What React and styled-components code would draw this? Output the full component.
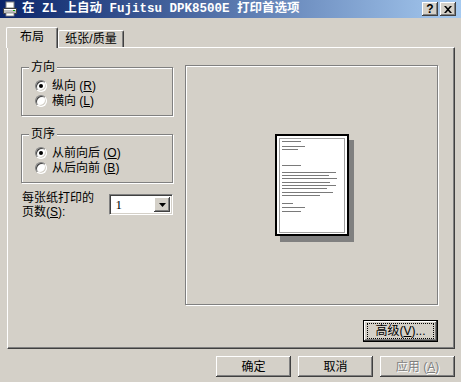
import React from "react";
import styled, { createGlobalStyle } from "styled-components";

const GlobalStyle = createGlobalStyle`
  html, body {
    margin: 0;
    padding: 0;
    background: #d4d0c8;
  }
  body {
    font-family: "Liberation Sans", "Noto Sans CJK SC", sans-serif;
    font-size: 12px;
    color: #000;
  }
`;

const raised = `
  background: #d4d0c8;
  box-shadow: inset -1px -1px #404040, inset 1px 1px #ffffff,
    inset -2px -2px #808080, inset 2px 2px #d4d0c8;
`;

const etched = `
  border: 1px solid #808080;
  box-shadow: inset 1px 1px #ffffff, 1px 1px 0 #ffffff;
`;

const Window = styled.div`
  width: 461px;
  height: 382px;
  background: #d4d0c8;
  display: flex;
  flex-direction: column;
  overflow: hidden;
`;

const TitleBar = styled.div`
  height: 18px;
  display: flex;
  align-items: center;
  padding: 0 5px 0 2px;
  background: linear-gradient(90deg, #0a246a 0%, #a6caf0 100%);
`;

const TitleText = styled.div`
  flex: 1;
  margin-left: 4px;
  color: #fff;
  font-family: "Liberation Mono", "Noto Sans CJK SC", monospace;
  font-weight: bold;
  font-size: 12.5px;
  line-height: 18px;
  white-space: pre;
`;

const CaptionButtons = styled.div`
  display: flex;
  gap: 2px;
`;

const CaptionButton = styled.div`
  ${raised}
  width: 16px;
  height: 14px;
  display: flex;
  align-items: center;
  justify-content: center;
  font-weight: bold;
  font-size: 12px;
  line-height: 14px;
`;

const Body = styled.div`
  flex: 1;
  display: flex;
  flex-direction: column;
  padding: 9px 6px 0 7px;
`;

const TabRow = styled.div`
  display: flex;
  align-items: flex-end;
  padding-left: 1px;
  height: 20px;
  position: relative;
  z-index: 1;
`;

const Tab = styled.div`
  box-sizing: border-box;
  width: ${(p) => p.$w}px;
  height: ${(p) => (p.$active ? 21 : 17)}px;
  margin-left: ${(p) => (p.$active ? -2 : 0)}px;
  margin-bottom: ${(p) => (p.$active ? -1 : 0)}px;
  background: #d4d0c8;
  border-top: 1px solid #fff;
  border-left: 1px solid #fff;
  border-right: 1px solid #404040;
  border-radius: 2px 2px 0 0;
  box-shadow: inset -1px 0 #808080;
  display: flex;
  align-items: center;
  justify-content: center;
  padding-bottom: ${(p) => (p.$active ? 2 : 0)}px;
  line-height: 12px;
`;

const Panel = styled.div`
  box-sizing: border-box;
  height: 302px;
  border-top: 1px solid #fff;
  border-left: 1px solid #fff;
  border-right: 1px solid #404040;
  border-bottom: 1px solid #404040;
  box-shadow: inset -1px -1px #808080;
  padding: 18px 0 0 13px;
`;

const PanelInner = styled.div`
  width: 417px;
  display: flex;
  flex-direction: column;
`;

const TopRow = styled.div`
  display: flex;
  align-items: flex-start;
  gap: 12px;
`;

const LeftColumn = styled.div`
  width: 152px;
  display: flex;
  flex-direction: column;
`;

const GroupBox = styled.div`
  ${etched}
  position: relative;
  margin-top: ${(p) => p.$mt}px;
  padding: 10px 0 ${(p) => p.$pb}px 13px;
`;

const GroupCaption = styled.div`
  position: absolute;
  top: -7px;
  left: 7px;
  padding: 0 2px;
  background: #d4d0c8;
  line-height: 12px;
`;

const RadioRow = styled.div`
  height: 15px;
  display: flex;
  align-items: center;
  gap: 5px;
  line-height: 12px;
  white-space: nowrap;
`;

const RadioCircle = styled.span`
  position: relative;
  box-sizing: border-box;
  width: 12px;
  height: 12px;
  border-radius: 50%;
  background: #fff;
  border: 1px solid;
  border-color: #808080 #ffffff #ffffff #808080;
  box-shadow: inset 1px 1px #404040, inset -1px -1px #d4d0c8;
  &::after {
    content: "";
    display: ${(p) => (p.$checked ? "block" : "none")};
    position: absolute;
    left: 3px;
    top: 3px;
    width: 4px;
    height: 4px;
    border-radius: 50%;
    background: #000;
  }
`;

const Key = styled.span`
  text-decoration: underline;
`;

const PagesRow = styled.div`
  display: flex;
  align-items: flex-start;
  margin-top: 9px;
`;

const PagesLabel = styled.div`
  width: 88px;
  padding-left: 1px;
  display: flex;
  flex-direction: column;
`;

const LabelLine = styled.div`
  height: 13.5px;
  line-height: 13.5px;
  white-space: nowrap;
`;

const SelectBox = styled.div`
  box-sizing: border-box;
  width: 64px;
  height: 21px;
  margin-top: 2px;
  background: #fff;
  border: 1px solid;
  border-color: #808080 #ffffff #ffffff #808080;
  box-shadow: inset 1px 1px #404040, inset -1px -1px #d4d0c8;
  display: flex;
  align-items: center;
  padding: 2px 2px 2px 5px;
`;

const SelectValue = styled.div`
  flex: 1;
  font-family: "Liberation Serif", serif;
  font-size: 13px;
  line-height: 15px;
`;

const ArrowButton = styled.div`
  ${raised}
  width: 16px;
  height: 15px;
  display: flex;
  align-items: center;
  justify-content: center;
`;

const Preview = styled.div`
  ${etched}
  box-sizing: border-box;
  width: 253px;
  height: 240px;
  margin-top: -1px;
  display: flex;
  align-items: center;
  justify-content: center;
`;

const PageSvg = styled.svg`
  display: block;
  margin: 0 -5px -6px 0;
`;

const AdvancedRow = styled.div`
  display: flex;
  justify-content: flex-end;
  margin-top: 15px;
`;

const Button = styled.div`
  box-sizing: border-box;
  width: 75px;
  height: ${(p) => p.$h || 21}px;
  background: #d4d0c8;
  box-shadow: ${(p) =>
    p.$default
      ? "inset 0 0 0 1px #000, inset -2px -2px #404040, inset 2px 2px #ffffff, inset -3px -3px #808080"
      : "inset -1px -1px #404040, inset 1px 1px #ffffff, inset -2px -2px #808080"};
  display: flex;
  align-items: center;
  justify-content: center;
  line-height: 12px;
  color: ${(p) => (p.$disabled ? "#808080" : "#000")};
  text-shadow: ${(p) => (p.$disabled ? "1px 1px 0 #ffffff" : "none")};
  white-space: nowrap;
`;

const FocusRing = styled.div`
  padding: 2px 4px;
  outline: 1px dotted #000;
  outline-offset: -1px;
  width: 59px;
  text-align: center;
`;

const ButtonRow = styled.div`
  display: flex;
  justify-content: flex-end;
  gap: 7px;
  margin-top: 7px;
`;

const pageLines = [
  [7, 26, 7], [7, 30, 12], [7, 23, 15], [7, 26, 31], [7, 61, 38], [7, 54, 41],
  [7, 62, 44], [7, 55, 48], [7, 61, 51], [7, 52, 54], [7, 58, 58], [7, 45, 61],
  [7, 18, 69], [7, 30, 73], [7, 26, 77],
];

function PrinterIcon() {
  return (
    <svg width="16" height="16" viewBox="0 0 16 16">
      <rect x="4" y="1" width="8" height="6" fill="#fff" stroke="#808080" />
      <path d="M1.5 7.5h13v5h-13z" fill="#c0c0c0" stroke="#404040" />
      <rect x="2" y="8" width="12" height="1" fill="#fff" />
      <rect x="4" y="12" width="8" height="3" fill="#fff" stroke="#808080" strokeWidth="0.8" />
      <rect x="11" y="9" width="2" height="1" fill="#00a000" />
    </svg>
  );
}

function PagePreview() {
  return (
    <PageSvg width="79" height="108" viewBox="0 0 79 108">
      <rect x="5" y="6" width="74" height="102" fill="#808080" />
      <rect x="1" y="1" width="72" height="100" fill="#fff" stroke="#000" strokeWidth="2" />
      <rect x="4.5" y="4.5" width="65" height="94" fill="none" stroke="#a0a0a0" />
      {pageLines.map(([x1, x2, y], i) => (
        <rect key={i} x={x1} y={y} width={x2 - x1} height="1" fill="#7a7a7a" />
      ))}
    </PageSvg>
  );
}

function Radio({ checked, label, k }) {
  return (
    <RadioRow>
      <RadioCircle $checked={checked} />
      <span>
        {label} (<Key>{k}</Key>)
      </span>
    </RadioRow>
  );
}

function App() {
  return (
    <Window>
      <GlobalStyle />
      <TitleBar>
        <PrinterIcon />
        <TitleText>在 ZL 上自动 Fujitsu DPK8500E 打印首选项</TitleText>
        <CaptionButtons>
          <CaptionButton>?</CaptionButton>
          <CaptionButton>
            <svg width="8" height="7" viewBox="0 0 8 7">
              <path d="M0 0h2l2 2.2L6 0h2L5 3.5 8 7H6L4 4.8 2 7H0l3-3.5z" fill="#000" />
            </svg>
          </CaptionButton>
        </CaptionButtons>
      </TitleBar>

      <Body>
        <TabRow>
          <Tab $active $w={52}>布局</Tab>
          <Tab $w={66}>纸张/质量</Tab>
        </TabRow>
        <Panel>
          <PanelInner>
            <TopRow>
              <LeftColumn>
                <GroupBox $mt={1} $pb={7}>
                  <GroupCaption>方向</GroupCaption>
                  <Radio checked label="纵向" k="R" />
                  <Radio label="横向" k="L" />
                </GroupBox>
                <GroupBox $mt={18} $pb={7}>
                  <GroupCaption>页序</GroupCaption>
                  <Radio checked label="从前向后" k="O" />
                  <Radio label="从后向前" k="B" />
                </GroupBox>
                <PagesRow>
                  <PagesLabel>
                    <LabelLine>每张纸打印的</LabelLine>
                    <LabelLine>
                      页数(<Key>S</Key>):
                    </LabelLine>
                  </PagesLabel>
                  <SelectBox>
                    <SelectValue>1</SelectValue>
                    <ArrowButton>
                      <svg width="7" height="4" viewBox="0 0 7 4">
                        <path d="M0 0h7L3.5 4z" fill="#000" />
                      </svg>
                    </ArrowButton>
                  </SelectBox>
                </PagesRow>
              </LeftColumn>
              <Preview>
                <PagePreview />
              </Preview>
            </TopRow>
            <AdvancedRow>
              <Button $default $h={22}>
                <FocusRing>
                  高级(<Key>V</Key>)...
                </FocusRing>
              </Button>
            </AdvancedRow>
          </PanelInner>
        </Panel>
        <ButtonRow>
          <Button>确定</Button>
          <Button>取消</Button>
          <Button $disabled>
            应用 (<Key>A</Key>)
          </Button>
        </ButtonRow>
      </Body>
    </Window>
  );
}

export default App;
